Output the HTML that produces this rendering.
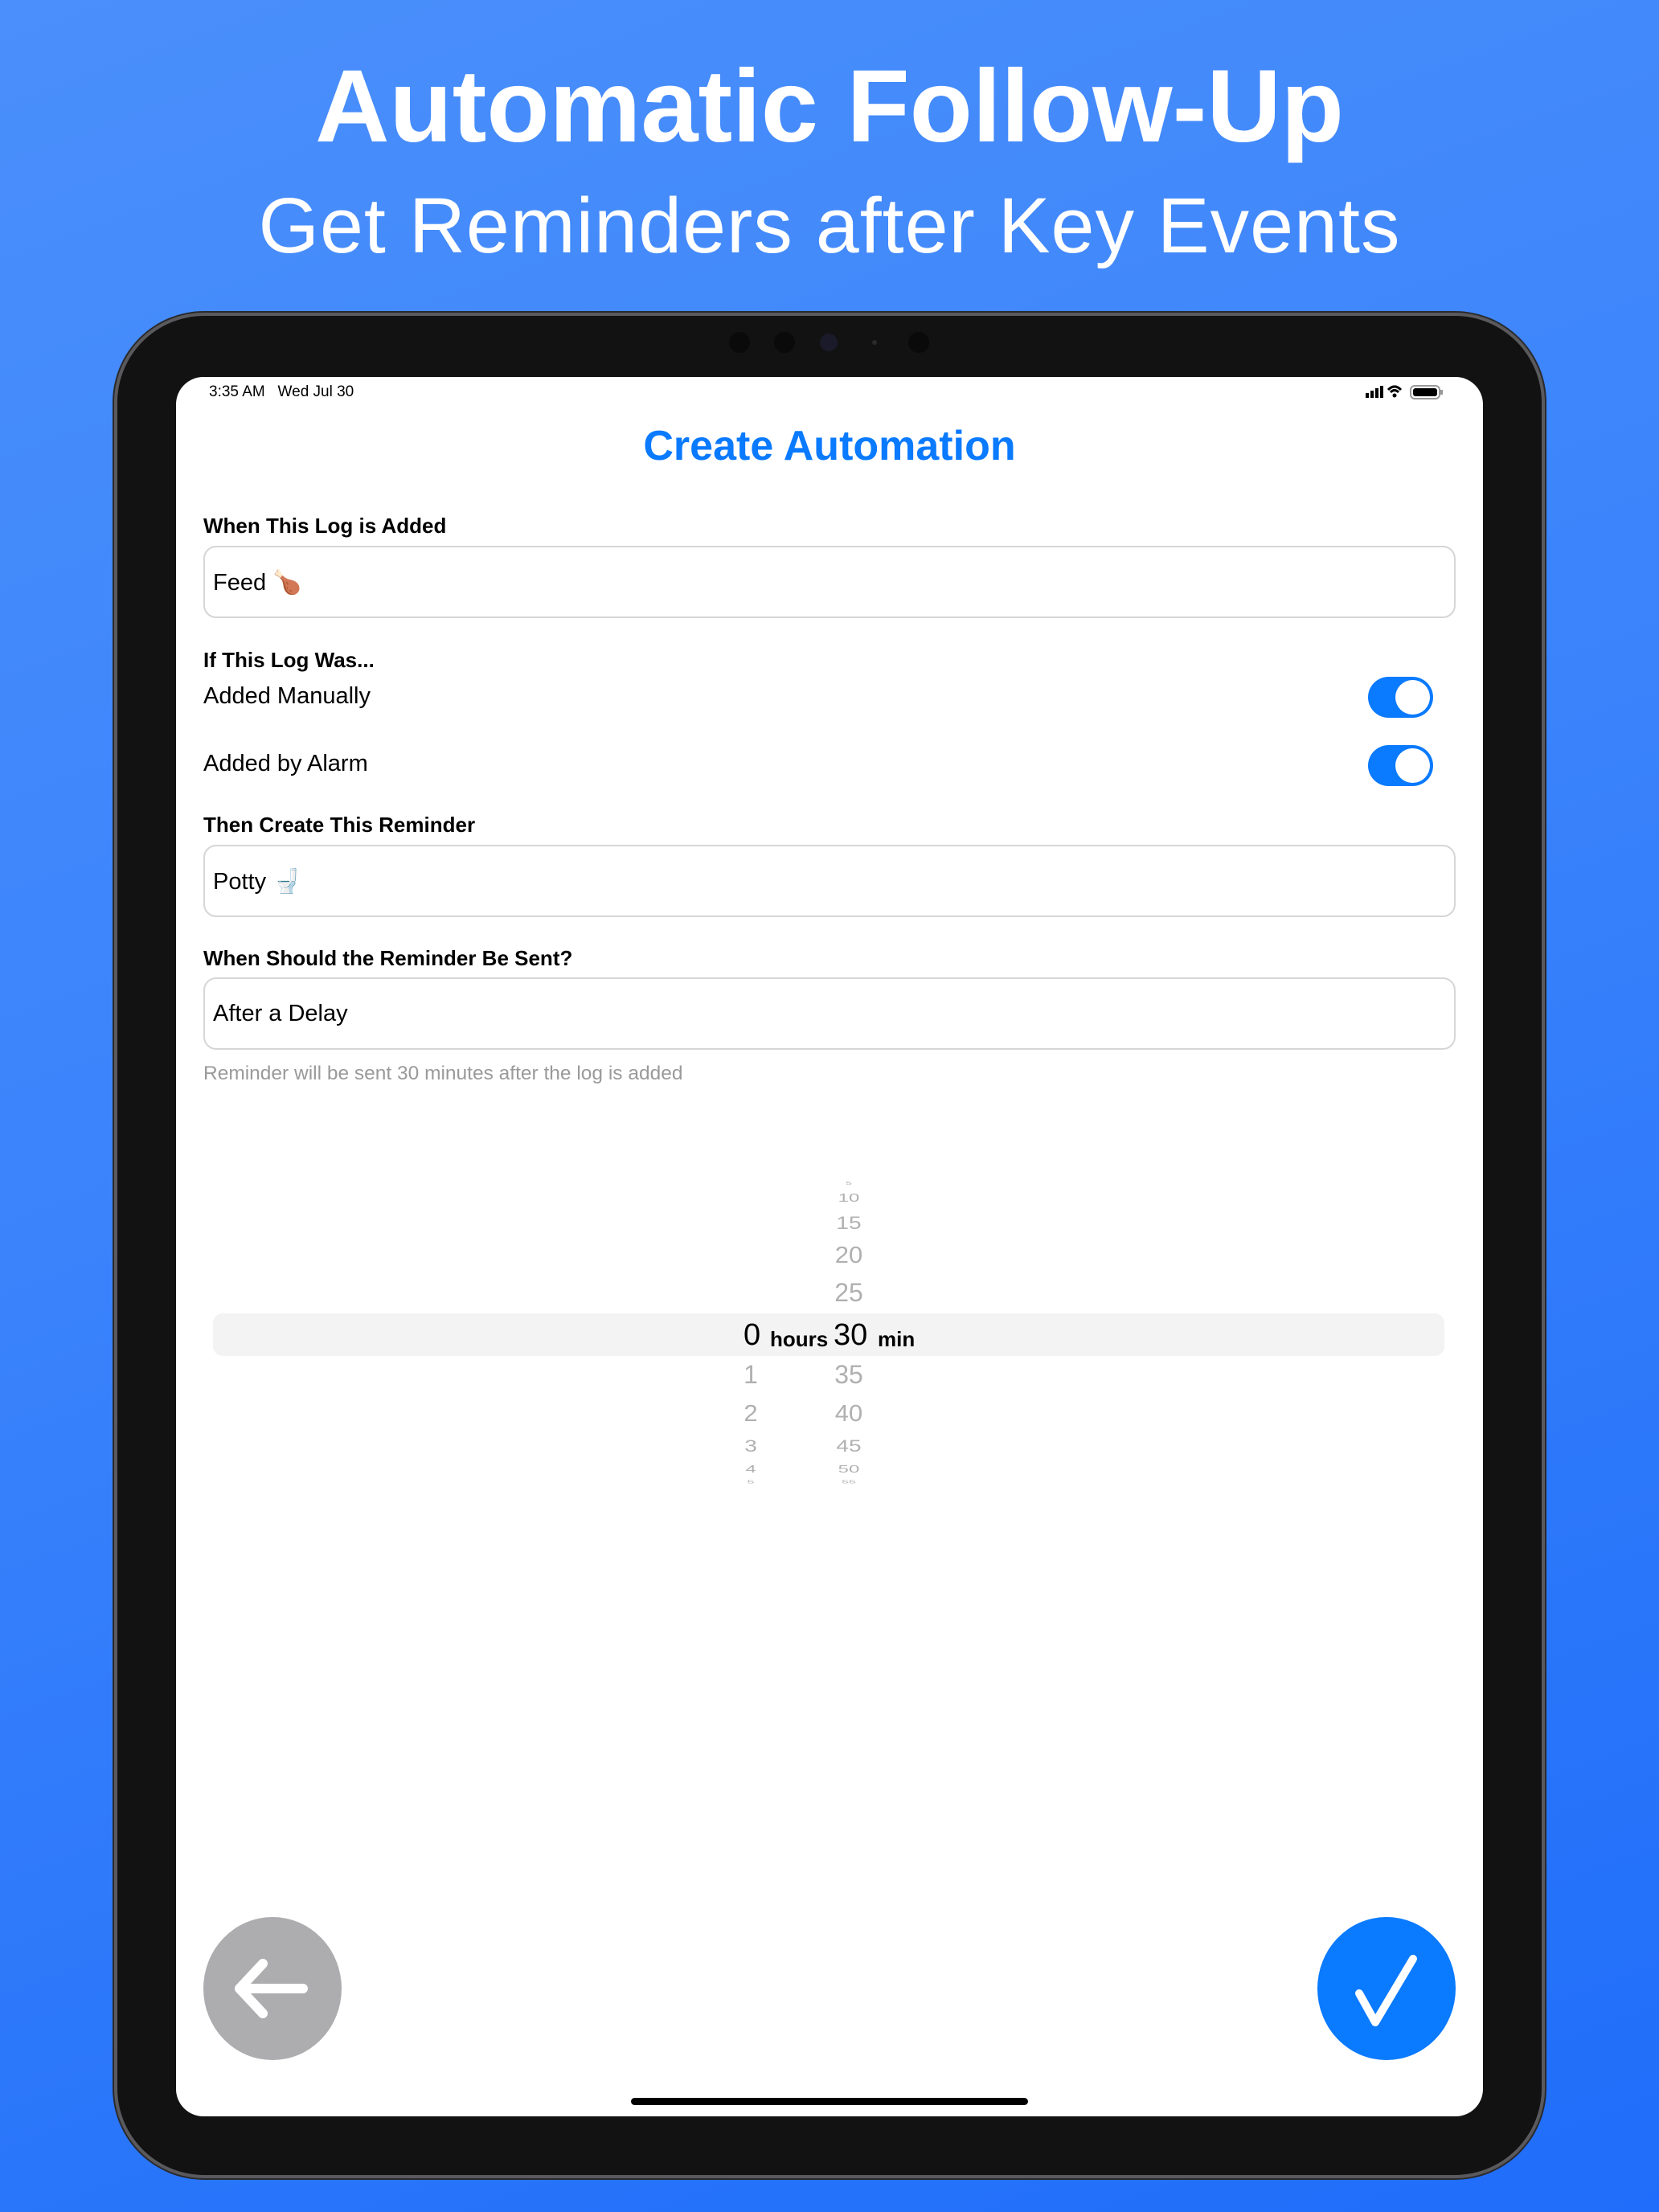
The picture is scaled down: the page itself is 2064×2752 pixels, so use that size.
<!DOCTYPE html>
<html><head><meta charset="utf-8"><style>
*{margin:0;padding:0;box-sizing:border-box}
body{width:2064px;height:2752px;overflow:hidden;position:relative;font-family:"Liberation Sans","DejaVu Sans",sans-serif;background:linear-gradient(160deg,#4a8ffb 0%,#3a83fb 45%,#1f6dfa 100%)}
.abs{position:absolute}
.t1{left:0;width:2064px;text-align:center;top:58px;font-size:128px;font-weight:bold;color:#fff;line-height:150px}
.t2{left:0;width:2064px;text-align:center;top:222px;font-size:97px;color:#fff;line-height:118px;letter-spacing:1px}
.bezel{left:146px;top:393px;width:1772px;height:2313px;border-radius:108px;background:#121212;box-shadow:0 0 0 4px #5a5a5e,0 0 0 6px #2a2a2c}
.screen{left:219px;top:469px;width:1626px;height:2164px;border-radius:34px;background:#fff;overflow:hidden}
.dot{width:26px;height:26px;border-radius:50%;background:#0a0a0a;top:413px}
.lbl{font-size:26px;font-weight:bold;color:#000;left:34px}
.fld{left:34px;width:1558px;height:90px;border:2px solid #d6d6d6;border-radius:16px}
.fld span{position:absolute;left:10px;top:27px;font-size:29px;color:#000}
.row{font-size:29px;color:#000;left:34px}
.tog{width:81px;height:51px;border-radius:26px;background:#0a7aff;left:1483px}
.tog::after{content:"";position:absolute;right:4px;top:4px;width:43px;height:43px;border-radius:50%;background:#fff}
.pk{color:#b0b0b0;text-align:center;width:80px;font-family:"Liberation Sans",sans-serif;transform-origin:center}
</style></head><body>
<div class="abs t1">Automatic Follow-Up</div>
<div class="abs t2">Get Reminders after Key Events</div>
<div class="abs" style="left:1720px;top:387px;width:88px;height:10px;background:#6a6a6e;border-radius:4px"></div>
<div class="abs" style="left:1916px;top:558px;width:8px;height:74px;background:#5a5a5e;border-radius:3px"></div>
<div class="abs" style="left:1916px;top:658px;width:8px;height:76px;background:#5a5a5e;border-radius:3px"></div>
<div class="abs bezel"></div>
<div class="abs dot" style="left:907px"></div>
<div class="abs dot" style="left:963px"></div>
<div class="abs dot" style="left:1020px;width:22px;height:22px;top:415px;background:#1a1a2a"></div>
<div class="abs dot" style="left:1085px;width:6px;height:6px;top:423px;background:#2a2a2a"></div>
<div class="abs dot" style="left:1130px"></div>
<div class="abs screen">
 <div class="abs" style="left:41px;top:8px;font-size:19px;color:#000">3:35 AM&nbsp;&nbsp;&nbsp;Wed Jul 30</div>
 <svg class="abs" style="left:1478px;top:8px" width="105" height="22" viewBox="0 0 105 22">
  <rect x="2" y="12" width="4" height="6" fill="#000"/><rect x="8" y="9" width="4" height="9" fill="#000"/><rect x="14" y="6" width="4" height="12" fill="#000"/><rect x="20" y="3" width="4" height="15" fill="#000"/>
  <path d="M30 8 Q38 0 46 8" stroke="#000" stroke-width="3" fill="none"/><path d="M33 11 Q38 6 43 11" stroke="#000" stroke-width="3" fill="none"/><circle cx="38" cy="15" r="2.5" fill="#000"/>
  <rect x="58" y="3" width="36" height="16" rx="5" fill="none" stroke="#999" stroke-width="2"/><rect x="61" y="6" width="30" height="10" rx="3" fill="#000"/><rect x="95" y="8" width="3" height="6" fill="#999"/>
 </svg>
 <div class="abs" style="left:0;width:1626px;text-align:center;top:54px;font-size:52px;font-weight:bold;color:#0a7aff;line-height:64px">Create Automation</div>
 <div class="abs lbl" style="top:170px">When This Log is Added</div>
 <div class="abs fld" style="top:210px"><span>Feed 🍗</span></div>
 <div class="abs lbl" style="top:337px">If This Log Was...</div>
 <div class="abs row" style="top:381px">Added Manually</div>
 <div class="abs tog" style="top:373px"></div>
 <div class="abs row" style="top:465px">Added by Alarm</div>
 <div class="abs tog" style="top:458px"></div>
 <div class="abs lbl" style="top:542px">Then Create This Reminder</div>
 <div class="abs fld" style="top:582px"><span>Potty 🚽</span></div>
 <div class="abs lbl" style="top:708px">When Should the Reminder Be Sent?</div>
 <div class="abs fld" style="top:747px"><span>After a Delay</span></div>
 <div class="abs" style="left:34px;top:853px;font-size:24.5px;color:#9a9a9a">Reminder will be sent 30 minutes after the log is added</div>
 <div class="abs" style="left:46px;top:1165px;width:1532px;height:53px;background:#f3f3f3;border-radius:12px"></div>
 <div class="abs" style="left:706px;top:1170px;font-size:38px;color:#000;line-height:44px">0</div>
 <div class="abs" style="left:739px;top:1179px;font-size:26px;font-weight:bold;color:#000;line-height:36px">hours</div>
 <div class="abs" style="left:818px;top:1170px;font-size:38px;color:#000;line-height:44px">30</div>
 <div class="abs" style="left:873px;top:1179px;font-size:26px;font-weight:bold;color:#000;line-height:36px">min</div>
 <div class="abs pk" style="left:797px;top:995px;font-size:14px;transform:scaleY(.4)">5</div>
 <div class="abs pk" style="left:797px;top:1008px;font-size:24px;transform:scaleY(.6)">10</div>
 <div class="abs pk" style="left:797px;top:1037px;font-size:28px;transform:scaleY(.8)">15</div>
 <div class="abs pk" style="left:797px;top:1075px;font-size:31px;transform:scaleY(.92)">20</div>
 <div class="abs pk" style="left:797px;top:1121px;font-size:32px">25</div>
 <div class="abs pk" style="left:797px;top:1223px;font-size:32px">35</div>
 <div class="abs pk" style="left:797px;top:1272px;font-size:31px;transform:scaleY(.92)">40</div>
 <div class="abs pk" style="left:797px;top:1314px;font-size:28px;transform:scaleY(.75)">45</div>
 <div class="abs pk" style="left:797px;top:1345px;font-size:24px;transform:scaleY(.55)">50</div>
 <div class="abs pk" style="left:797px;top:1366px;font-size:16px;transform:scaleY(.35)">55</div>
 <div class="abs pk" style="left:675px;top:1223px;font-size:32px">1</div>
 <div class="abs pk" style="left:675px;top:1272px;font-size:31px;transform:scaleY(.92)">2</div>
 <div class="abs pk" style="left:675px;top:1314px;font-size:28px;transform:scaleY(.75)">3</div>
 <div class="abs pk" style="left:675px;top:1345px;font-size:24px;transform:scaleY(.55)">4</div>
 <div class="abs pk" style="left:675px;top:1366px;font-size:16px;transform:scaleY(.35)">5</div>
 <div class="abs" style="left:34px;top:1916px;width:172px;height:178px;border-radius:50%;background:#adadb0"></div>
 <svg class="abs" style="left:34px;top:1916px" width="172" height="178" viewBox="0 0 172 178"><path d="M46 89 H124 M74 58 L45 89 L74 120" stroke="#fff" stroke-width="12" stroke-linecap="round" stroke-linejoin="round" fill="none"/></svg>
 <div class="abs" style="left:1420px;top:1916px;width:172px;height:178px;border-radius:50%;background:#0a7aff"></div>
 <svg class="abs" style="left:1420px;top:1916px" width="172" height="178" viewBox="0 0 172 178"><path d="M52 95 L72 131 L119 52" stroke="#fff" stroke-width="10" stroke-linecap="round" stroke-linejoin="round" fill="none"/></svg>
 <div class="abs" style="left:566px;top:2141px;width:494px;height:9px;border-radius:5px;background:#000"></div>
</div>
</body></html>
